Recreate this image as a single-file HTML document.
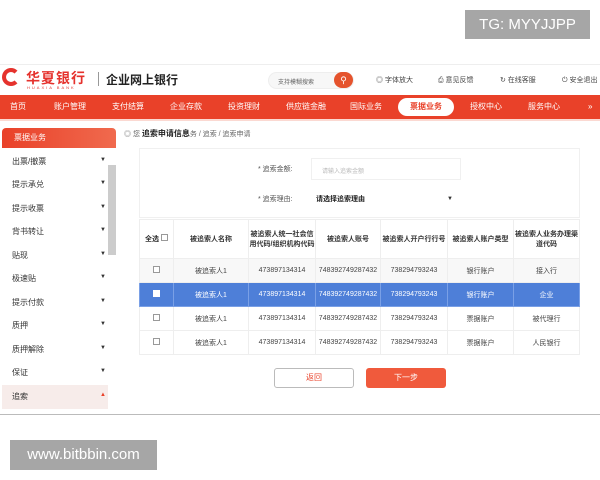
<!DOCTYPE html><html><head><meta charset="utf-8"><style>
*{margin:0;padding:0;box-sizing:border-box}
body{width:600px;height:480px;background:#fff;position:relative;overflow:hidden;font-family:"Liberation Sans","Noto Sans CJK SC",sans-serif;color:#333}
.a{position:absolute;white-space:nowrap}
.nav span{position:absolute;top:0;height:24px;line-height:24px;font-size:8px;color:#fff}
.side div{position:absolute;left:12px;font-size:8px;color:#333;white-space:nowrap}
.side i{position:absolute;left:100px;font-style:normal;font-size:6px;color:#333}
table{border-collapse:collapse;position:absolute;left:139px;top:219px;width:441px;font-size:7px;text-align:center}
td{border:1px solid #eee;height:24px;color:#444}
th{border:1px solid #eee;height:39px;font-size:7px;font-weight:bold;color:#333;background:#fff}
tr.s td{background:#4e7fd8;color:#fff;border-color:#7aa0e6}
tr.g td{background:#f8f8f8}
.cb{display:inline-block;width:7px;height:7px;border:1px solid #999;background:#fff}
</style></head><body>
<div class="a" style="left:465px;top:10px;width:125px;height:29px;background:#a6a6a6;color:#fff;font-size:15px;line-height:29px;text-align:center">TG: MYYJJPP</div>
<div class="a" style="left:10px;top:440px;width:147px;height:30px;background:#a6a6a6;color:#fff;font-size:15px;line-height:30px;text-align:center">www.bitbbin.com</div>
<div class="a" style="left:0;top:64px;width:600px;height:1px;background:#eee"></div>
<div class="a" style="left:2px;top:68px;width:18px;height:18px;border:4px solid #e5322d;border-radius:50%;border-right-color:transparent"></div>
<div class="a" style="left:26px;top:68px;font-size:14px;font-weight:bold;color:#e5322d;letter-spacing:1px">华夏银行</div>
<div class="a" style="left:27px;top:85px;font-size:4px;color:#e5322d;letter-spacing:2px">HUAXIA BANK</div>
<div class="a" style="left:98px;top:72px;width:1px;height:14px;background:#999"></div>
<div class="a" style="left:106px;top:71px;font-size:12px;font-weight:bold;color:#222">企业网上银行</div>
<div class="a" style="left:268px;top:72px;width:86px;height:17px;border-radius:9px;background:#f7f7f7;border:1px solid #eee;font-size:6px;color:#666;padding:4px 9px">支持模糊搜索</div>
<div class="a" style="left:334px;top:72px;width:19px;height:16px;border-radius:8px;background:#e5532d;color:#fff;font-size:9px;text-align:center;line-height:16px">⚲</div>
<div class="a" style="left:376px;top:75px;font-size:7px;color:#444">◎ 字体放大</div>
<div class="a" style="left:438px;top:75px;font-size:7px;color:#444">⎙ 意见反馈</div>
<div class="a" style="left:500px;top:75px;font-size:7px;color:#444">↻ 在线客服</div>
<div class="a" style="left:562px;top:75px;font-size:7px;color:#444">⏻ 安全退出</div>
<div class="a nav" style="left:0;top:95px;width:600px;height:24px;background:#e94129">
<span style="left:10px">首页</span><span style="left:54px">账户管理</span><span style="left:112px">支付结算</span><span style="left:170px">企业存款</span><span style="left:228px">投资理财</span><span style="left:286px">供应链金融</span><span style="left:350px">国际业务</span>
<span style="left:398px;top:3px;height:18px;line-height:18px;width:56px;background:#fff;border-radius:9px;color:#e94129;text-align:center;font-weight:bold">票据业务</span>
<span style="left:470px">授权中心</span><span style="left:528px">服务中心</span><span style="left:588px">»</span></div>
<div class="a" style="left:0;top:119px;width:600px;height:2px;background:#fbd9d2"></div>
<div class="a" style="left:2px;top:128px;width:114px;height:20px;background:linear-gradient(90deg,#e94129,#f06a4e);border-radius:4px 4px 0 0;color:#fff;font-size:8px;line-height:20px;padding-left:12px">票据业务</div>
<div class="a side" style="left:0;top:0;width:120px;height:420px">
<div style="top:156px">出票/撤票</div><i style="top:157px">▼</i>
<div style="top:179px">提示承兑</div><i style="top:180px">▼</i>
<div style="top:203px">提示收票</div><i style="top:204px">▼</i>
<div style="top:226px">背书转让</div><i style="top:227px">▼</i>
<div style="top:250px">贴现</div><i style="top:251px">▼</i>
<div style="top:273px">极速贴</div><i style="top:274px">▼</i>
<div style="top:297px">提示付款</div><i style="top:298px">▼</i>
<div style="top:320px">质押</div><i style="top:321px">▼</i>
<div style="top:344px">质押解除</div><i style="top:345px">▼</i>
<div style="top:367px">保证</div><i style="top:368px">▼</i>
</div>
<div class="a" style="left:2px;top:385px;width:106px;height:24px;background:#f7ecea"></div>
<div class="a" style="left:12px;top:391px;font-size:8px">追索</div>
<div class="a" style="left:100px;top:392px;font-size:6px;color:#e94129">▲</div>
<div class="a" style="left:108px;top:165px;width:8px;height:90px;background:#ccc"></div>
<div class="a" style="left:0;top:414px;width:600px;height:1px;background:#bbb"></div>
<div class="a" style="left:124px;top:128px;font-size:7px;color:#666">◎ 您 <b style="color:#222;font-size:8px">追索申请信息</b>务 / 追索 / 追索申请</div>
<div class="a" style="left:139px;top:148px;width:441px;height:70px;border:1px solid #f0f0f0"></div>
<div class="a" style="left:258px;top:164px;font-size:7px;color:#555">* 追索金额:</div>
<div class="a" style="left:311px;top:158px;width:150px;height:22px;border:1px solid #f0f0f0;font-size:6px;color:#bbb;padding:7px 10px">请输入追索金额</div>
<div class="a" style="left:258px;top:194px;font-size:7px;color:#555">* 追索理由:</div>
<div class="a" style="left:316px;top:194px;font-size:7px;color:#222;font-weight:bold">请选择追索理由</div>
<div class="a" style="left:447px;top:196px;font-size:6px;color:#333">▼</div>
<table>
<tr><th style="width:34px">全选 <span class="cb"></span></th><th style="width:75px">被追索人名称</th><th style="width:67px">被追索人统一社会信用代码/组织机构代码</th><th style="width:65px">被追索人账号</th><th style="width:67px">被追索人开户行行号</th><th style="width:66px">被追索人账户类型</th><th>被追索人业务办理渠道代码</th></tr>
<tr class="g"><td><span class="cb"></span></td><td>被追索人1</td><td>473897134314</td><td>748392749287432</td><td>738294793243</td><td>银行账户</td><td>接入行</td></tr>
<tr class="s"><td><span class="cb" style="border-color:#fff"></span></td><td>被追索人1</td><td>473897134314</td><td>748392749287432</td><td>738294793243</td><td>银行账户</td><td>企业</td></tr>
<tr><td><span class="cb"></span></td><td>被追索人1</td><td>473897134314</td><td>748392749287432</td><td>738294793243</td><td>票据账户</td><td>被代理行</td></tr>
<tr><td><span class="cb"></span></td><td>被追索人1</td><td>473897134314</td><td>748392749287432</td><td>738294793243</td><td>票据账户</td><td>人民银行</td></tr>
</table>
<div class="a" style="left:274px;top:368px;width:80px;height:20px;border:1px solid #bbb;border-radius:3px;color:#e94129;font-size:8px;text-align:center;line-height:18px">返回</div>
<div class="a" style="left:366px;top:368px;width:80px;height:20px;background:#f05a3c;border-radius:3px;color:#fff;font-size:8px;text-align:center;line-height:20px">下一步</div>
</body></html>
